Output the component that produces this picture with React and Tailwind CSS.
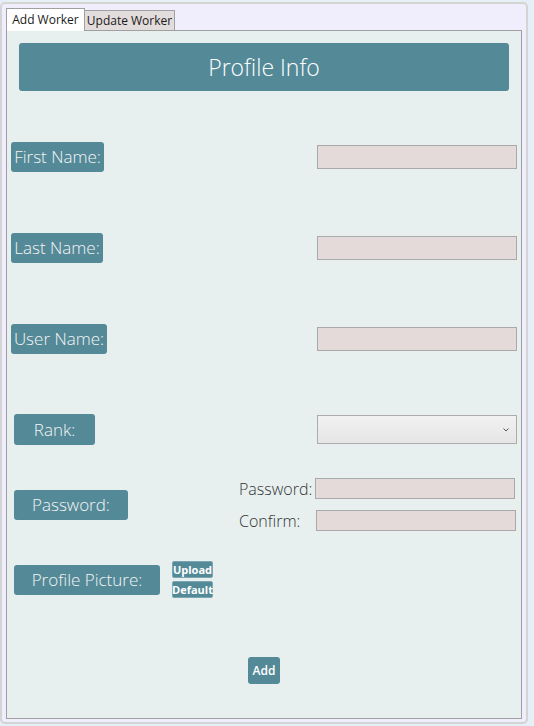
import React from "react"

const teal = "bg-[#548a98]"

function Label({ children, w }) {
    return (
        <div
            className={`${teal} ${w} h-[30px] rounded-[3px] flex items-center justify-center whitespace-nowrap text-[#f4f4f4] text-[17px] font-light`}
        >
            {children}
        </div>
    )
}

function TextBox({ h = "h-[24px]" }) {
    return <div className={`w-[200px] ${h} border border-[#a9a9a9] bg-[#e3dad9]`}></div>
}

function SmallButton({ children }) {
    return (
        <div className={`${teal} w-[41px] h-[17px] rounded-[2px] border border-[#7aa6b1] flex items-center justify-center text-white text-[11px] font-bold leading-none`}>
            {children}
        </div>
    )
}

export default function App() {
    return (
        <div
            className="w-[534px] h-[726px] bg-[#e6eef6] pt-[2px]"
            style={{ fontFamily: "'Open Sans', 'Noto Sans', sans-serif" }}
        >
            <div className="w-[528px] h-[722px] border-2 border-[#d4d4d4] rounded-[5px] bg-[#f0eefc] pt-[4px] pl-[4px]">
                {/* tabs */}
                <div className="flex items-end h-[22px] text-[12px] text-[#1a1a1a]">
                    <div className="relative z-10 w-[79px] h-[23px] bg-white border border-b-0 border-[#a0a0a0] flex items-center justify-center -mb-px">
                        Add Worker
                    </div>
                    <div className="w-[90px] h-[20px] bg-[#e3dcdc] border border-l-0 border-b-0 border-[#a0a0a0] flex items-center justify-center">
                        Update Worker
                    </div>
                </div>

                {/* panel */}
                <div className="w-[516px] h-[689px] border border-[#a0a0a0] bg-[#e7f0ef] flex flex-col">
                    <div className={`${teal} mx-[12px] mt-[12px] h-[48px] rounded-[3px] flex items-center justify-center text-white text-[23px] font-light`}>
                        Profile Info
                    </div>

                    <div className="mt-[51px] flex items-center justify-between pl-[4px] pr-[4px]">
                        <Label w="w-[93px]">First Name:</Label>
                        <TextBox />
                    </div>
                    <div className="mt-[61px] flex items-center justify-between pl-[4px] pr-[4px]">
                        <Label w="w-[92px]">Last Name:</Label>
                        <TextBox />
                    </div>
                    <div className="mt-[61px] flex items-center justify-between pl-[4px] pr-[4px]">
                        <Label w="w-[96px]">User Name:</Label>
                        <TextBox />
                    </div>

                    <div className="mt-[60px] flex items-center justify-between pl-[7px] pr-[4px]">
                        <div className={`${teal} w-[81px] h-[31px] rounded-[3px] flex items-center justify-center text-[#f4f4f4] text-[17px] font-light`}>
                            Rank:
                        </div>
                        <div className="w-[200px] h-[29px] border border-[#acacac] bg-gradient-to-b from-[#f2f2f2] to-[#e5e5e5] flex items-center justify-end pr-[7px]">
                            <svg width="6" height="4" viewBox="0 0 6 4">
                                <path d="M0.5 0.5 L3 3 L5.5 0.5" fill="none" stroke="#555" strokeWidth="1" />
                            </svg>
                        </div>
                    </div>

                    <div className="mt-[33px] flex items-center justify-between pl-[7px] pr-[5px]">
                        <Label w="w-[114px]">Password:</Label>
                        <div className="flex flex-col gap-[11px] text-[16px] font-light text-[#333]">
                            <div className="flex items-center">
                                <span className="w-[76px] leading-none whitespace-nowrap">Password:</span>
                                <TextBox h="h-[21px]" />
                            </div>
                            <div className="flex items-center">
                                <span className="w-[77px] leading-none whitespace-nowrap">Confirm:</span>
                                <TextBox h="h-[21px]" />
                            </div>
                        </div>
                    </div>

                    <div className="mt-[30px] flex items-center pl-[7px] gap-[12px]">
                        <Label w="w-[146px]">Profile Picture:</Label>
                        <div className="flex flex-col gap-[3px]">
                            <SmallButton>Upload</SmallButton>
                            <SmallButton>Default</SmallButton>
                        </div>
                    </div>

                    <div className="mt-[59px] flex justify-center">
                        <div className={`${teal} w-[32px] h-[27px] rounded-[3px] flex items-center justify-center text-white text-[12px] font-semibold`}>
                            Add
                        </div>
                    </div>
                </div>
            </div>
        </div>
    )
}
